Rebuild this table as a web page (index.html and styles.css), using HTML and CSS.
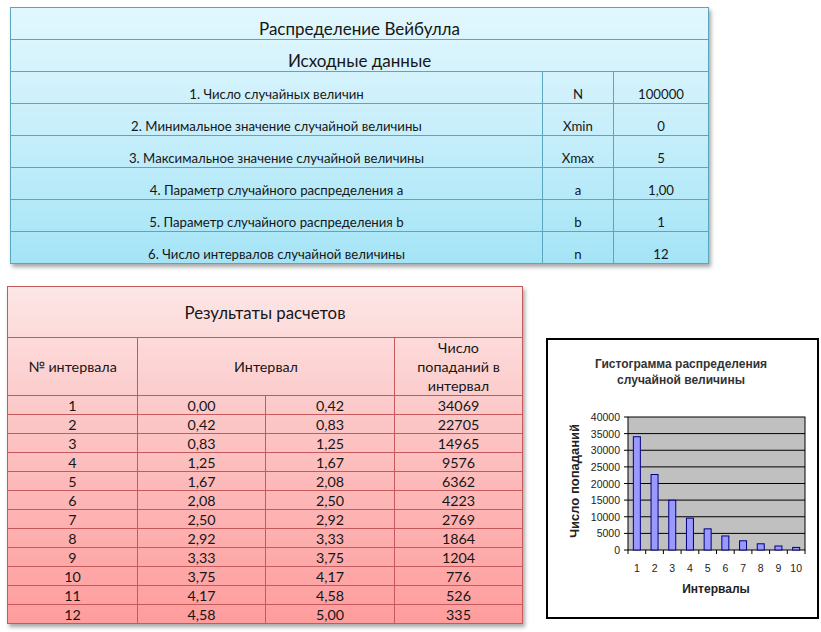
FILE: index.html
```html
<!DOCTYPE html>
<html lang="ru">
<head>
<meta charset="utf-8">
<title>Распределение Вейбулла</title>
<link rel="stylesheet" href="styles.css">
</head>
<body>
<div class="page">
  <table class="params">
    <colgroup><col class="c-name"><col class="c-sym"><col class="c-val"></colgroup>
    <tr><td colspan="3" class="title">Распределение Вейбулла</td></tr>
    <tr><td colspan="3" class="title">Исходные данные</td></tr>
    <tr><td>1. Число случайных величин</td><td>N</td><td>100000</td></tr>
    <tr><td>2. Минимальное значение случайной величины</td><td>Xmin</td><td>0</td></tr>
    <tr><td>3. Максимальное значение случайной величины</td><td>Xmax</td><td>5</td></tr>
    <tr><td>4. Параметр случайного распределения a</td><td>a</td><td>1,00</td></tr>
    <tr><td>5. Параметр случайного распределения b</td><td>b</td><td>1</td></tr>
    <tr><td>6. Число интервалов случайной величины</td><td>n</td><td>12</td></tr>
  </table>

  <div class="lower">
    <table class="results">
      <colgroup><col class="r1"><col class="r2"><col class="r3"><col class="r4"></colgroup>
      <tr class="r-title"><td colspan="4">Результаты расчетов</td></tr>
      <tr class="r-head"><td>№ интервала</td><td colspan="2">Интервал</td><td>Число<br>попаданий в<br>интервал</td></tr>
      <tr><td>1</td><td>0,00</td><td>0,42</td><td>34069</td></tr>
      <tr><td>2</td><td>0,42</td><td>0,83</td><td>22705</td></tr>
      <tr><td>3</td><td>0,83</td><td>1,25</td><td>14965</td></tr>
      <tr><td>4</td><td>1,25</td><td>1,67</td><td>9576</td></tr>
      <tr><td>5</td><td>1,67</td><td>2,08</td><td>6362</td></tr>
      <tr><td>6</td><td>2,08</td><td>2,50</td><td>4223</td></tr>
      <tr><td>7</td><td>2,50</td><td>2,92</td><td>2769</td></tr>
      <tr><td>8</td><td>2,92</td><td>3,33</td><td>1864</td></tr>
      <tr><td>9</td><td>3,33</td><td>3,75</td><td>1204</td></tr>
      <tr><td>10</td><td>3,75</td><td>4,17</td><td>776</td></tr>
      <tr><td>11</td><td>4,17</td><td>4,58</td><td>526</td></tr>
      <tr><td>12</td><td>4,58</td><td>5,00</td><td>335</td></tr>
    </table>

    <div class="chart">
      <svg class="chart-svg" width="269" height="277" viewBox="0 0 269 277">
        <text class="ch-title" x="133" y="28" text-anchor="middle">Гистограмма распределения</text>
        <text class="ch-title" x="133" y="44" text-anchor="middle">случайной величины</text>

        <rect x="80" y="77" width="177" height="133" fill="#c0c0c0" stroke="#000" stroke-width="1"/>
        <g stroke="#000" stroke-width="1">
          <line x1="80" y1="93.6" x2="257" y2="93.6"/>
          <line x1="80" y1="110.25" x2="257" y2="110.25"/>
          <line x1="80" y1="126.9" x2="257" y2="126.9"/>
          <line x1="80" y1="143.5" x2="257" y2="143.5"/>
          <line x1="80" y1="160.1" x2="257" y2="160.1"/>
          <line x1="80" y1="176.75" x2="257" y2="176.75"/>
          <line x1="80" y1="193.4" x2="257" y2="193.4"/>
          <line x1="76" y1="77" x2="80" y2="77"/>
          <line x1="76" y1="93.6" x2="80" y2="93.6"/>
          <line x1="76" y1="110.25" x2="80" y2="110.25"/>
          <line x1="76" y1="126.9" x2="80" y2="126.9"/>
          <line x1="76" y1="143.5" x2="80" y2="143.5"/>
          <line x1="76" y1="160.1" x2="80" y2="160.1"/>
          <line x1="76" y1="176.75" x2="80" y2="176.75"/>
          <line x1="76" y1="193.4" x2="80" y2="193.4"/>
          <line x1="76" y1="210" x2="80" y2="210"/>
          <line x1="80" y1="210" x2="80" y2="214"/>
          <line x1="97.7" y1="210" x2="97.7" y2="214"/>
          <line x1="115.4" y1="210" x2="115.4" y2="214"/>
          <line x1="133.1" y1="210" x2="133.1" y2="214"/>
          <line x1="150.8" y1="210" x2="150.8" y2="214"/>
          <line x1="168.5" y1="210" x2="168.5" y2="214"/>
          <line x1="186.2" y1="210" x2="186.2" y2="214"/>
          <line x1="203.9" y1="210" x2="203.9" y2="214"/>
          <line x1="221.6" y1="210" x2="221.6" y2="214"/>
          <line x1="239.3" y1="210" x2="239.3" y2="214"/>
          <line x1="257" y1="210" x2="257" y2="214"/>
        </g>
        <g fill="#9999ff" stroke="#000080" stroke-width="1">
          <rect x="85.35" y="96.72" width="7" height="113.28"/>
          <rect x="103.05" y="134.51" width="7" height="75.49"/>
          <rect x="120.75" y="160.24" width="7" height="49.76"/>
          <rect x="138.45" y="178.16" width="7" height="31.84"/>
          <rect x="156.15" y="188.85" width="7" height="21.15"/>
          <rect x="173.85" y="195.96" width="7" height="14.04"/>
          <rect x="191.55" y="200.79" width="7" height="9.21"/>
          <rect x="209.25" y="203.8" width="7" height="6.2"/>
          <rect x="226.95" y="206" width="7" height="4"/>
          <rect x="244.65" y="207.42" width="7" height="2.58"/>
        </g>
        <g class="ch-ylab" text-anchor="end">
          <text x="72" y="81">40000</text>
          <text x="72" y="97.6">35000</text>
          <text x="72" y="114.25">30000</text>
          <text x="72" y="130.9">25000</text>
          <text x="72" y="147.5">20000</text>
          <text x="72" y="164.1">15000</text>
          <text x="72" y="180.75">10000</text>
          <text x="72" y="197.4">5000</text>
          <text x="72" y="214">0</text>
        </g>
        <g class="ch-xlab" text-anchor="middle">
          <text x="88.85" y="232">1</text>
          <text x="106.55" y="232">2</text>
          <text x="124.25" y="232">3</text>
          <text x="141.95" y="232">4</text>
          <text x="159.65" y="232">5</text>
          <text x="177.35" y="232">6</text>
          <text x="195.05" y="232">7</text>
          <text x="212.75" y="232">8</text>
          <text x="230.45" y="232">9</text>
          <text x="248.15" y="232">10</text>
        </g>
        <text class="ch-axis" x="168" y="253" text-anchor="middle">Интервалы</text>
        <text class="ch-axis ch-ytitle" x="0" y="0" text-anchor="middle" transform="translate(31 141) rotate(-90)">Число попаданий</text>
      </svg>
    </div>
  </div>
</div>
</body>
</html>
```

FILE: styles.css
```css
html, body {
  margin: 0;
  padding: 0;
  background: #ffffff;
}

.page {
  width: 821px;
  height: 632px;
  font-family: Lato, "Open Sans", "Liberation Sans", sans-serif;
  color: #161616;
  overflow: hidden;
}

/* ---------- parameters table ---------- */
.params {
  margin: 7px 0 0 10px;
  width: 698px;
  border-collapse: collapse;
  table-layout: fixed;
  background: linear-gradient(to bottom, #e2f7fd 0%, #c9effb 45%, #a4e4f6 100%);
  box-shadow: 2px 3px 4px rgba(0, 0, 0, 0.35);
  font-size: 13.2px;
}
.params .c-name { width: 532px; }
.params .c-sym { width: 71px; }
.params .c-val { width: 95px; }
.params td {
  height: 30px;
  padding: 0 2px 1px;
  border: 1px solid #5ba6bf;
  text-align: center;
  vertical-align: bottom;
  line-height: 16px;
}
.params td.title {
  font-size: 17px;
  height: 29px;
  padding-bottom: 2px;
}

/* ---------- lower area ---------- */
.lower {
  display: flex;
  align-items: flex-start;
  margin-top: 22px;
}

/* ---------- results table ---------- */
.results {
  margin-left: 7px;
  width: 515px;
  border-collapse: collapse;
  table-layout: fixed;
  background: linear-gradient(to bottom, #fde6e6 0%, #fcc6c6 40%, #ff9c9c 100%);
  box-shadow: 2px 3px 4px rgba(0, 0, 0, 0.35);
  font-size: 14.3px;
}
.results .r1 { width: 130px; }
.results .r2 { width: 128px; }
.results .r3 { width: 129px; }
.results .r4 { width: 128px; }
.results td {
  height: 18px;
  padding: 0 2px;
  border: 1px solid #c6595c;
  text-align: center;
  vertical-align: middle;
  line-height: 17px;
}
.results .r-title td {
  height: 50px;
  font-size: 16.8px;
}
.results .r-head td {
  height: 57px;
  line-height: 19px;
  padding: 0 2px;
}

/* ---------- chart ---------- */
.chart {
  margin: 52px 0 0 23px;
  width: 269px;
  height: 277px;
  border: 2px solid #000;
  background: #fff;
}
.chart-svg {
  display: block;
  font-family: "Liberation Sans", Arial, sans-serif;
}
.ch-title {
  font-size: 12px;
  font-weight: bold;
  fill: #333;
}
.ch-ylab, .ch-xlab {
  font-size: 10.5px;
  fill: #222;
}
.ch-axis {
  font-size: 12px;
  font-weight: bold;
  fill: #222;
}
.ch-ytitle {
  font-size: 13px;
}
```
